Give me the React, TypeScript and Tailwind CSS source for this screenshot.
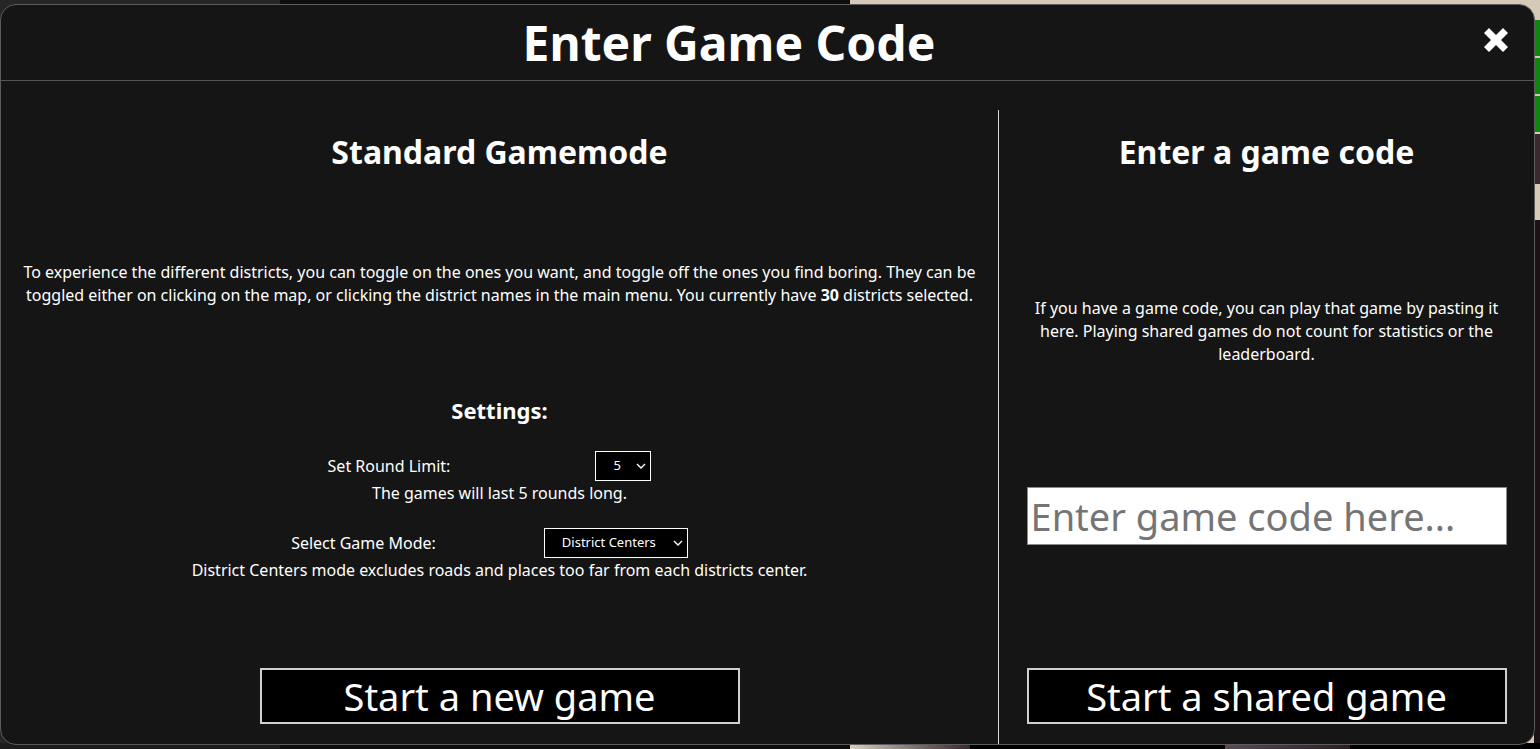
import React from "react";

function Chevron() {
  return (
    <svg width="10" height="6" viewBox="0 0 10 6" className="absolute right-[5px] top-1/2 -translate-y-1/2 pointer-events-none">
      <path d="M1 1 L5 5 L9 1" fill="none" stroke="white" strokeWidth="1.4" />
    </svg>
  );
}

export default function App() {
  return (
    <div
      className="relative w-[1540px] h-[749px] overflow-hidden bg-[#111111]"
      style={{ fontFamily: '"Noto Sans", "Open Sans", sans-serif' }}
    >
      {/* background page glimpses */}
      <div className="absolute inset-0 flex">
        <div className="w-[280px] h-full bg-[#262626]" />
        <div className="w-[570px] h-full bg-[#0e0e0e]" />
        <div className="flex-1 h-full bg-[#d5cab8]" />
      </div>
      <div className="absolute right-0 top-[20px] w-[6px] h-[200px] flex flex-col gap-[2px]">
        <div className="h-[36px] bg-[#0a8a0a]" />
        <div className="h-[36px] bg-[#0a8a0a]" />
        <div className="h-[36px] bg-[#0a8a0a]" />
        <div className="h-[50px] bg-[#3a2a30]" />
      </div>
      <div className="absolute right-0 top-[220px] w-[6px] h-[529px] bg-[#1a1214]" />
      <div className="absolute left-0 bottom-0 w-full h-[6px] flex">
        <div className="w-[280px] bg-[#1c1c1c]" />
        <div className="w-[570px] bg-[#0d0d0d]" />
        <div className="w-[120px] bg-gradient-to-r from-[#d9cfbd] to-[#3a2a30]" />
        <div className="w-[255px] bg-black" />
        <div className="w-[125px] bg-gradient-to-r from-[#5a4a55] to-[#2a1f25]" />
        <div className="flex-1 bg-black" />
      </div>

      {/* modal */}
      <div className="absolute left-0 top-[4px] w-[1535px] h-[741px] bg-[#151515] border border-[#5c5c5c] rounded-[16px] flex flex-col text-white">
        <div className="relative h-[76px] shrink-0 border-b border-[#555555] flex items-center justify-center pr-[77px]">
          <h1 className="text-[48px] font-bold leading-none text-white mt-[1px]">Enter Game Code</h1>
          <button className="absolute right-[22px] top-[19px] w-[32px] h-[32px]">
            <svg width="32" height="32" viewBox="0 0 32 32">
              <path d="M4 9 L9 4 L16 11 L23 4 L28 9 L21 16 L28 23 L23 28 L16 21 L9 28 L4 23 L11 16 Z" fill="white" />
            </svg>
          </button>
        </div>

        <div className="flex flex-1 pt-[29px]">
          {/* left column */}
          <div className="w-[997px] shrink-0 flex flex-col items-center">
            <h2 className="mt-[20px] text-[32px] font-bold leading-[44px]">Standard Gamemode</h2>
            <p className="mt-[87px] text-[16px] leading-[23px] text-center px-[20px]">
              To experience the different districts, you can toggle on the ones you want, and toggle off the ones you find boring. They can be
              <br />
              toggled either on clicking on the map, or clicking the district names in the main menu. You currently have <b>30</b> districts selected.
            </p>
            <h3 className="mt-[88px] text-[22px] font-bold leading-[30px]">Settings:</h3>
            <div className="mt-[26px] flex items-center pr-[20px] h-[30px]">
              <span className="text-[16px]">Set Round Limit:</span>
              <div className="relative ml-[145px]">
                <select className="appearance-none w-[56px] h-[30px] bg-black border border-white text-white text-[13px] pl-[17px]">
                  <option>5</option>
                </select>
                <Chevron />
              </div>
            </div>
            <p className="mt-[1px] text-[16px] leading-[23px]">The games will last 5 rounds long.</p>
            <div className="mt-[23px] flex items-center pr-[20px] h-[30px]">
              <span className="text-[16px]">Select Game Mode:</span>
              <div className="relative ml-[108px]">
                <select className="appearance-none w-[144px] h-[30px] bg-black border border-white text-white text-[13px] pl-[17px]">
                  <option>District Centers</option>
                </select>
                <Chevron />
              </div>
            </div>
            <p className="mt-[1px] text-[16px] leading-[23px]">District Centers mode excludes roads and places too far from each districts center.</p>
            <button className="mt-[86px] w-[480px] h-[56px] bg-black border-2 border-[#cfcfcf] text-[38px] leading-none text-white">
              Start a new game
            </button>
          </div>

          {/* right column */}
          <div className="flex-1 border-l border-[#d8d8d8] flex flex-col items-center">
            <h2 className="mt-[20px] text-[32px] font-bold leading-[44px]">Enter a game code</h2>
            <p className="mt-[123px] w-[480px] text-[16px] leading-[23px] text-center">
              If you have a game code, you can play that game by pasting it here. Playing shared games do not count for statistics or the leaderboard.
            </p>
            <input
              className="mt-[121px] w-[480px] h-[58px] bg-white border border-[#8a8a8a] text-[38px] text-black px-[3px] placeholder:text-[#757575] outline-none"
              placeholder="Enter game code here..."
            />
            <button className="mt-[123px] w-[480px] h-[56px] bg-black border-2 border-[#cfcfcf] text-[38px] leading-none text-white">
              Start a shared game
            </button>
          </div>
        </div>
      </div>
    </div>
  );
}
